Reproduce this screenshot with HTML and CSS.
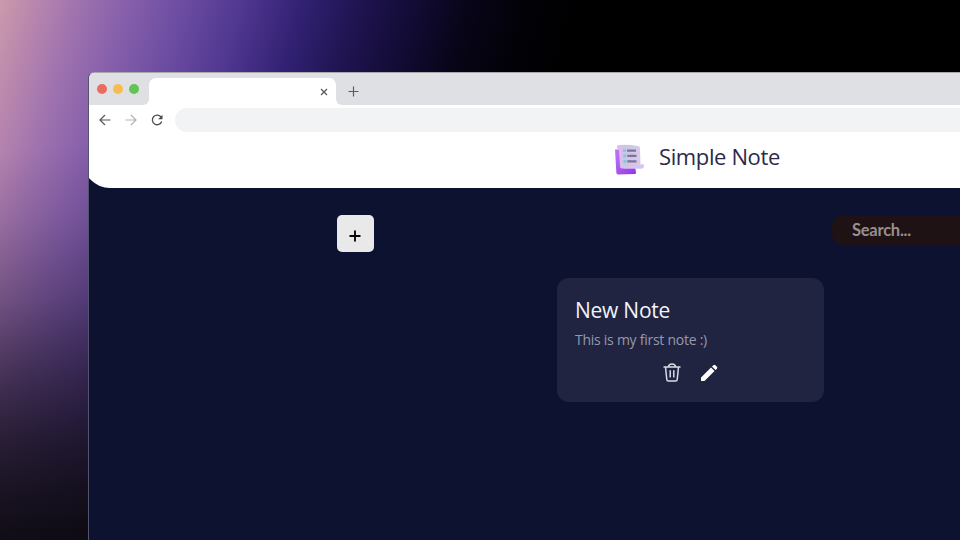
FILE: index.html
```html
<!DOCTYPE html>
<html lang="en">
<head>
<meta charset="utf-8">
<title>Simple Note</title>
<link rel="stylesheet" href="styles.css">
</head>
<body>
<main class="window">
  <div class="tabs">
    <div class="lights"><i class="red"></i><i class="yellow"></i><i class="green"></i></div>
    <div class="tab"><svg width="8" height="8" viewBox="0 0 8 8"><path d="M1 1l6 6M7 1l-6 6" stroke="#55565a" stroke-width="1.2"/></svg></div>
    <div class="newtab"><svg width="11" height="11" viewBox="0 0 11 11"><path d="M5.5 .5v10M.5 5.5h10" stroke="#5b5c61" stroke-width="1.2"/></svg></div>
  </div>
  <div class="toolbar">
    <svg width="12" height="12" viewBox="0 0 12 12" fill="none" stroke="#55565a" stroke-width="1.2"><path d="M11.5 6H1M6 1L1 6l5 5"/></svg>
    <svg width="12" height="12" viewBox="0 0 12 12" fill="none" stroke="#b2b3b6" stroke-width="1.2"><path d="M.5 6H11M6 1l5 5-5 5"/></svg>
    <svg width="12" height="12" viewBox="0 0 12 12"><path d="M10.2 3.3A4.8 4.8 0 1 0 10.7 7.500" fill="none" stroke="#4b4c50" stroke-width="1.3"/><path d="M11.5.8v4.400H7.100z" fill="#4b4c50"/></svg>
    <div class="address"></div>
  </div>
  <header class="header">
    <svg class="logo" width="31" height="31" viewBox="0 0 31 31">
      <defs><linearGradient id="back" x1="0" y1="0" x2="1" y2="1"><stop offset="0" stop-color="#bd7bf7"/><stop offset="1" stop-color="#9333e8"/></linearGradient>
      <linearGradient id="paper"><stop offset="0" stop-color="#e5b9f0"/><stop offset=".35" stop-color="#c9c7e4"/><stop offset="1" stop-color="#dccbeb"/></linearGradient></defs>
      <path d="M1 5.5L19 5l3 24q0 1-1 1L4 30.5q-1.500 0-1.700-2z" fill="url(#back)"/>
      <path d="M3 1.500Q12 0 24 2q2 .3 2 2l.5 16.500h3q1 0 .5 2-.5 2-2 2L8 24.500q-2 0-2-2L5 6Q2.500 5 3 1.500z" fill="url(#paper)"/>
      <path d="M8 23l21-2.500q1 0 .5 2-.5 2-2 2L10 24.500z" fill="#d9c1f2"/>
      <path d="M13 6.700H22M13.300 11.800h9.200M13.300 17.300h9.200" stroke="#81729b" stroke-width="2.300"/>
      <path d="M9 6.700h2.800M9.300 11.800h2.800M9.500 17.300h2.800" stroke="#83c5d2" stroke-width="2.800"/>
    </svg>
    <h1 class="brand">Simple Note</h1>
  </header>
  <div class="actions">
    <button class="add" aria-label="Add"><svg width="12" height="12" viewBox="0 0 12 12"><path d="M6 .5v11M.5 6h11" stroke="#080808" stroke-width="1.900"/></svg></button>
    <div class="search"><span>Search...</span></div>
  </div>
  <article class="note">
    <h2>New Note</h2>
    <p>This is my first note :)</p>
    <div class="tools">
      <svg width="18" height="19" viewBox="0 0 18 19" fill="none" stroke="#d9dbe8" stroke-width="1.500"><path d="M.5 4h17M5.500 4Q5.700 1 9 1t3.500 3M2.500 4l1.300 12.500q.1 1.500 1.600 1.500h7.200q1.500 0 1.600-1.500L15.500 4M7.200 7.300v7.200M10.800 7.300v7.200"/></svg>
      <svg class="pencil" width="18" height="18" viewBox="0 0 18 18" fill="#fff"><path d="M1 13.500L11 3.600 14.500 7 4.500 17H1zM12 2.600l1.400-1.400q1-.9 2 0l1.500 1.500q.9 1 0 2L15.500 6z"/></svg>
    </div>
  </article>
</main>
</body>
</html>
```
FILE: styles.css
```css
* { box-sizing: border-box; }
body {
  margin: 0;
  width: 960px;
  height: 540px;
  padding: 72px 0 0 88px;
  overflow: hidden;
  font-family: "Open Sans", "Noto Sans", sans-serif;
  background:
    linear-gradient(176deg, transparent 150px, rgba(16,12,24,.1) 220px, rgba(16,12,24,.3) 300px, rgba(16,12,24,.6) 380px, rgba(14,11,20,.78) 440px, rgba(12,10,16,.9) 500px, rgba(10,8,12,.97) 560px),
    linear-gradient(106deg, #cb9aab 0, #b886ad 35px, #a174af 73px, #8760ab 122px, #684aa0 184px, #4b338c 244px, #302070 296px, #211553 342px, #150d3b 388px, #080519 450px, #020106 510px, #000 570px);
}
.window {
  display: flex;
  flex-direction: column;
  height: 468px;
  background: #0c122f;
  border: solid #aaa7ad;
  border-width: 1px 0 0 1px;
  border-left-color: #54536b;
  border-radius: 6px 0 0 0;
  overflow: hidden;
}
.tabs { display: flex; flex: none; height: 32px; background: linear-gradient(#dfe0e4 15px, #fff 15px); }
.lights { display: flex; gap: 6px; width: 60px; padding: 11px 0 0 8px; background: #dfe0e4; border-bottom-right-radius: 6px; }
.lights i { width: 10px; height: 10px; border-radius: 50%; }
.red { background: #ec6b5e; }
.yellow { background: #f5bd4f; }
.green { background: #61c454; }
.tab { display: flex; justify-content: flex-end; width: 187px; height: 27px; margin-top: 5px; padding: 10px 8px 0 0; background: #fff; border-radius: 7px 7px 0 0; }
.newtab { flex: 1; height: 32px; padding: 13px 0 0 12px; background: #dfe0e4; border-bottom-left-radius: 6px; line-height: 0; }
.toolbar { display: flex; flex: none; align-items: center; gap: 14px; height: 29px; padding-left: 10px; background: #fff; }
.address { flex: 1; height: 24px; margin-left: -2px; background: #f1f3f4; border-radius: 12px 0 0 12px; }
.header { display: flex; flex: none; height: 54px; margin-left: -6px; padding: 10px 0 0 531px; background: #fff; border-radius: 0 0 0 27px; }
.brand { margin: -3px 0 0 14px; color: #2b2a48; font-size: 22px; letter-spacing: -.38px; font-weight: 400; line-height: 30px; white-space: nowrap; }
.actions { display: flex; flex: none; justify-content: space-between; margin-top: 27px; padding-left: 248px; }
.add { display: grid; place-items: center; width: 37px; height: 37px; padding: 5px 1px 0 0; background: #e9e9ea; border: 0; border-radius: 5px; }
.search { width: 128px; height: 30px; padding-left: 20px; color: #988f91; background: #1e1214; border-radius: 12px 0 0 12px; font: bold 16.5px/30px Lato, sans-serif; letter-spacing: -.25px; }
.note { flex: none; width: 267px; height: 124px; margin: 26px 0 0 468px; padding: 17px 18px; background: #202440; border-radius: 12px; }
.note h2 { margin: 0; color: #f2f3f9; font-size: 21px; letter-spacing: -.25px; font-weight: 400; line-height: 30px; }
.note p { margin: 5px 0 0; color: #9798ad; font-size: 14px; letter-spacing: -.26px; line-height: 20px; }
.tools { display: flex; justify-content: center; gap: 19px; margin-top: 13px; }
.pencil { margin: 1px 1px 0 0; }
```
